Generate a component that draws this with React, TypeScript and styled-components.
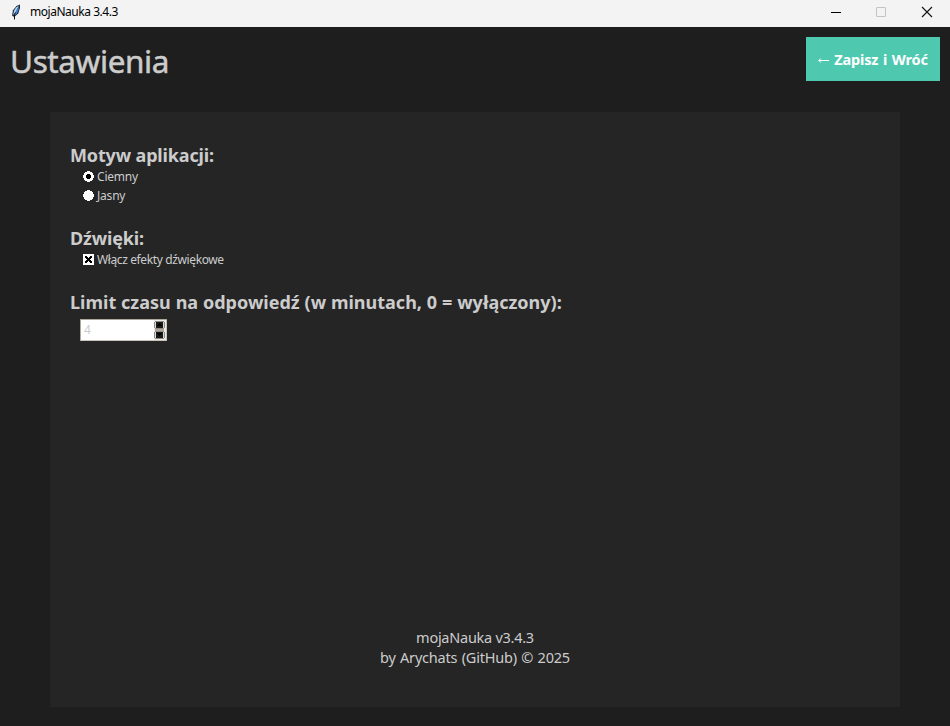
import React from 'react';
import styled, { createGlobalStyle } from 'styled-components';

const GlobalStyle = createGlobalStyle`
  * { box-sizing: border-box; }
  html, body { margin: 0; padding: 0; background: #1e1e1e; overflow: hidden; }
`;

const Window = styled.div`
  width: 950px;
  height: 726px;
  display: flex;
  flex-direction: column;
  overflow: hidden;
  background: #1e1e1e;
  color: #cccccc;
  font-family: 'Noto Sans', 'Open Sans', sans-serif;
  white-space: nowrap;
`;

const TitleBar = styled.header`
  height: 27px;
  flex: none;
  display: flex;
  align-items: center;
  padding: 0 0 4px 9px;
  background: #f3f3f3;
  color: #000;
`;

const WindowName = styled.span`
  margin-left: 8px;
  flex: 1;
  font-size: 12px;
  line-height: 16px;
  letter-spacing: -0.47px;
`;

const WindowButtons = styled.div`
  display: flex;
  svg { display: block; }
`;

const Header = styled.div`
  height: 85px;
  flex: none;
  display: flex;
  justify-content: space-between;
  align-items: flex-start;
  padding: 10px 10px 0;
`;

const Title = styled.h1`
  margin: 0;
  font-size: 31.5px;
  line-height: 48px;
  font-weight: 400;
  letter-spacing: -0.4px;
  -webkit-text-stroke: 0.5px #cccccc;
`;

const SaveButton = styled.button`
  width: 134px;
  height: 44px;
  border: 0;
  padding: 0;
  display: flex;
  align-items: center;
  justify-content: center;
  gap: 5px;
  background: #4ec9b0;
  color: #fff;
  font: 700 14.5px 'Noto Sans', sans-serif;
  letter-spacing: -0.15px;
  word-spacing: 1px;
  svg { margin-top: 2px; }
`;

const Panel = styled.main`
  width: 850px;
  height: 595px;
  margin: 0 auto;
  padding: 32px 20px 40px;
  display: flex;
  flex-direction: column;
  background: #252525;
`;

const Section = styled.section<{ $height: number }>`
  height: ${(p) => p.$height}px;
`;

const Heading = styled.h2<{ $tracking?: number; $words?: number }>`
  margin: 0;
  font-size: 18px;
  line-height: 23px;
  font-weight: 700;
  letter-spacing: ${(p) => p.$tracking ?? -0.15}px;
  word-spacing: ${(p) => p.$words ?? 0}px;
`;

const Option = styled.label<{ $tracking: number }>`
  height: 19px;
  display: flex;
  align-items: center;
  gap: 3px;
  padding-left: 13px;
  font-size: 12px;
  line-height: 19px;
  letter-spacing: ${(p) => p.$tracking}px;
  svg { display: block; flex: none; }
`;

const SpinBox = styled.div`
  width: 87px;
  height: 22px;
  margin: 5px 0 0 10px;
  border: 1px solid #aca89b;
  border-right-color: #c9c5ba;
  border-bottom-color: #c9c5ba;
  border-radius: 1px;
  display: flex;
  justify-content: space-between;
  background: #fff;
  color: #cccccc;
  font-size: 12px;
  line-height: 20px;
  padding-left: 3px;
`;

const Credits = styled.footer`
  margin-top: auto;
  text-align: center;
  font-size: 14.5px;
  line-height: 20px;
`;

const CreditLine = styled.div<{ $tracking: number; $words?: number }>`
  letter-spacing: ${(p) => p.$tracking}px;
  word-spacing: ${(p) => p.$words ?? 0}px;
`;

const Feather = () => (
  <svg width="13" height="18" viewBox="0 0 13 18">
    <path d="M11 1.5 7.4 3 4 7.2 3 12.5 5.2 14 9.2 10.5 11 5Z" fill="#1b2636" />
    <path d="M9.8 2.6 7 4.4 5 7.8 4.2 12 6 10.5Z" fill="#b5d4f6" />
    <path d="M10.2 2.8 9.5 7 8 10.2 5.6 12.6 5 11.7 7 8Z" fill="#3f86dc" />
    <path d="M6.4 9.5 5.5 11.5V16.5" fill="none" stroke="#101010" />
  </svg>
);

const Radio = ({ checked = false }: { checked?: boolean }) => (
  <svg width="11" height="11" viewBox="0 0 11 11" shapeRendering="crispEdges">
    <path d="M4 0h3v1h2v1h1v2h1v3h-1v2h-1v1h-2v1h-3v-1h-2v-1h-1v-2h-1v-3h1v-2h1v-1h2z" fill="#fff" />
    {checked && <path d="M4 3h3v1h1v3h-1v1h-3v-1h-1v-3h1z" fill="#000" />}
  </svg>
);

const CheckBox = () => (
  <svg width="11" height="11" viewBox="0 0 11 11" shapeRendering="crispEdges">
    <path d="M0 0h11v11H0z" fill="#fff" />
    <path d="M2 2h2v1h1v1h1v-1h1v-1h2v2h-1v1h-1v1h1v1h1v2h-2v-1h-1v-1h-1v1h-1v1h-2v-2h1v-1h1v-1h-1v-1h-1z" fill="#000" />
  </svg>
);

const SpinArrows = () => (
  <svg width="13" height="20" viewBox="0 0 13 20" shapeRendering="crispEdges">
    <path d="M1 0h12v20H1z" fill="#efece8" />
    {[1, 11].map((y) => (
      <g key={y}>
        <path d={`M2 ${y}h9v1h1v6h-1v1h-9v-1h-1v-6h1z`} fill="#8f8b84" />
        <path d={`M2 ${y + 1}h9v6h-9z`} fill="#dedad4" />
        <path d={`M3 ${y + 1}h7v6h-7z`} fill="#161a18" />
      </g>
    ))}
    <path d="M6 3h1v1h1v1h1v1H4V5h1V4h1z" fill="#000" />
    <path d="M4 13h5v1H8v1H7v1H6v-1H5v-1H4z" fill="#000" />
    <path d="M2 9h9v2H2z" fill="#aaa69c" />
  </svg>
);

export default function App() {
  return (
    <>
      <GlobalStyle />
      <Window>
        <TitleBar>
          <Feather />
          <WindowName>mojaNauka 3.4.3</WindowName>
          <WindowButtons>
            <svg width="124" height="22" viewBox="0 0 124 22" fill="none">
              <path d="M5 11.5h10" stroke="#000" />
              <rect x="50.5" y="6.5" width="9" height="9" rx="0.5" stroke="#c3c3c3" />
              <path d="m96 6 10 10m0-10L96 16" stroke="#111" strokeWidth="1.1" />
            </svg>
          </WindowButtons>
        </TitleBar>
        <Header>
          <Title>Ustawienia</Title>
          <SaveButton>
            <svg width="11" height="5" viewBox="0 0 11 5" fill="none" stroke="#fff">
              <path d="M.8 2.5H11M2.8.5.8 2.5l2 2" />
            </svg>
            <span>Zapisz i Wróć</span>
          </SaveButton>
        </Header>
        <Panel>
          <Section $height={83}>
            <Heading>Motyw aplikacji:</Heading>
            <Option $tracking={-0.2}><Radio checked />Ciemny</Option>
            <Option $tracking={-0.2}><Radio />Jasny</Option>
          </Section>
          <Section $height={64}>
            <Heading>Dźwięki:</Heading>
            <Option $tracking={-0.38}><CheckBox />Włącz efekty dźwiękowe</Option>
          </Section>
          <Section $height={60}>
            <Heading $tracking={0} $words={0.2}>Limit czasu na odpowiedź (w minutach, 0 = wyłączony):</Heading>
            <SpinBox>4<SpinArrows /></SpinBox>
          </Section>
          <Credits>
            <CreditLine $tracking={-0.26}>mojaNauka v3.4.3</CreditLine>
            <CreditLine $tracking={-0.2} $words={0.8}>by Arychats (GitHub) © 2025</CreditLine>
          </Credits>
        </Panel>
      </Window>
    </>
  );
}
